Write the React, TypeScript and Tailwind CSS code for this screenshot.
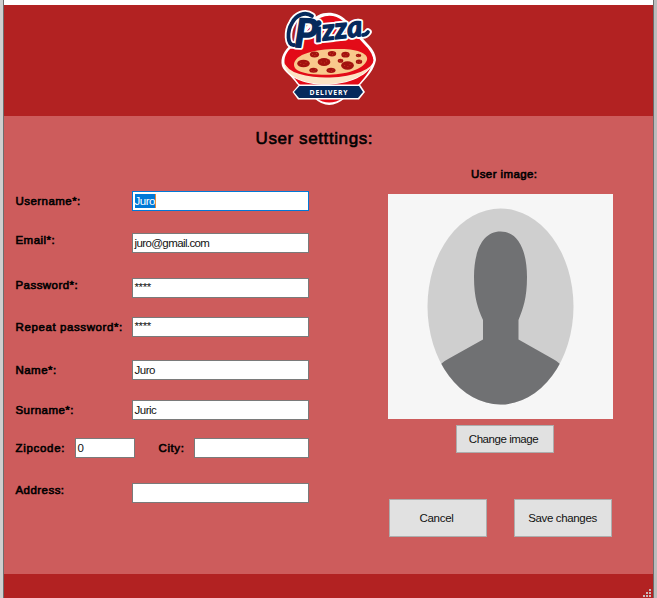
import React from "react";

type FieldProps = {
  label: string;
  value?: string;
  row: string;
  labelClass?: string;
  tracking?: string;
  valueClass?: string;
  selected?: boolean;
};

const labelFont =
  "font-['Liberation_Sans',Arial,sans-serif] text-[11.5px] leading-[14px] whitespace-pre text-black [-webkit-text-stroke:0.6px_black]";
const valueFont =
  "font-['Liberation_Sans',Arial,sans-serif] text-[11.5px] leading-[14px] whitespace-pre text-[#111]";

function Field({ label, value = "", row, labelClass = "", tracking = "tracking-[0.45px]", valueClass = "tracking-[-0.5px]", selected }: FieldProps) {
  return (
    <div className={`flex h-5 items-center ${row}`}>
      <span className={`w-[117px] shrink-0 pl-[0.5px] ${labelFont} ${tracking} ${labelClass}`}>{label}</span>
      <div className={`flex h-5 w-[177px] items-center border bg-white pl-[1.5px] ${selected ? "border-[#0078d7]" : "border-[#7a7a7a]"}`}>
        <span className={`leading-[14px] ${selected ? "border-r border-[#e88b3c] bg-[#0078d7] font-['Liberation_Sans',Arial,sans-serif] text-[11.5px] text-white" : valueFont} ${valueClass}`}>
          {value}
        </span>
      </div>
    </div>
  );
}

function Button({ children, className }: { children: React.ReactNode; className: string }) {
  return (
    <button
      className={`flex w-[98px] items-center justify-center border border-[#adadad] bg-[#e1e1e1] ${valueFont} ${className}`}
    >
      {children}
    </button>
  );
}

const letters: { c: string; x: number; y: number; size: number; turn: number }[] = [
  { c: "P", x: 24, y: 47, size: 40, turn: 2 },
  { c: "i", x: 46, y: 42, size: 28, turn: -6 },
  { c: "z", x: 53, y: 40.5, size: 29, turn: -6 },
  { c: "z", x: 65.5, y: 39, size: 29, turn: -6 },
  { c: "a", x: 78, y: 37.5, size: 29, turn: -6 },
];

function Word({ stroke, width }: { stroke: string; width: number }) {
  return (
    <g
      stroke={stroke}
      strokeWidth={width}
      fill={stroke}
      strokeLinejoin="round"
      strokeLinecap="round"
      fontFamily="Lato, sans-serif"
      fontStyle="italic"
      fontWeight="bold"
    >
      {letters.map((l, i) => (
        <text key={i} x={l.x} y={l.y} fontSize={l.size} transform={`rotate(${l.turn} ${l.x} ${l.y})`}>
          {l.c}
        </text>
      ))}
      <path
        d="M24 45 C17 46 17 31 22 23 C26 15 35 11 42 16 M93 35 Q96 35 98 32"
        fill="none"
        strokeWidth={width + 2.5}
      />
    </g>
  );
}

const pepperoni = [
  [44.5, 54.5, 4.6, 3],
  [62, 53.7, 4.2, 2.7],
  [75.5, 54.7, 4.2, 2.9],
  [88.5, 55.5, 2.8, 1.7],
  [33.5, 63.5, 6.3, 3.8],
  [54, 62, 6.4, 4],
  [70.5, 60.8, 2.8, 2],
  [89, 61.8, 3.2, 2.2],
  [77.5, 65.5, 6.4, 4.2],
  [43.5, 70.3, 4.2, 2.5],
  [61, 70.3, 4.5, 2.6],
];

function Logo() {
  return (
    <svg width="120" height="111" viewBox="0 5 120 111">
      <path
        d="M22 44 C14 50 10 58 12 66 C14 72 22 76 27 84 L44 98 Q59 112 75 98 L91 84 C98 76 104 70 106 60 C106 53 101 47 96 42 L76 20 C65 9 48 11 40 22Z"
        fill="#fff"
      />
      <path
        d="M24 46 C16 51 13 58 15 66 L29 84 L46 98 Q59 107 73 98 L89 84 C96 76 101 70 103 60 C103 54 99 49 94 44 L73 21 C64 13 51 14 43 24Z"
        fill="#e30b18"
      />
      <path d="M13 62 C15 93 98 93 105 58 C98 77 25 85 13 62Z" fill="#fff" />
      <path d="M14 63 C18 92 95 91 103.500 60 C94 78 27 82 14 63Z" fill="#fde3c4" />
      <ellipse cx="59.5" cy="61.5" rx="44" ry="16" fill="#e30b18" transform="rotate(-2 59 61)" />
      <path d="M24 65 C24 54 46 49 66 49 C88 48 99 54 97 60 C93 71 70 76 48 74.500 C34 74 24 71 24 65Z" fill="#f9c98c" />
      {pepperoni.map(([cx, cy, rx, ry], i) => (
        <g key={i}>
          <ellipse cx={cx} cy={cy} rx={rx} ry={ry} fill="#a3120f" />
          <path d={`M${cx - rx / 2} ${cy} h.8 M${cx + rx / 3} ${cy - 1} h.8 M${cx} ${cy + 1} h.8`} stroke="#d84a2b" strokeWidth=".8" />
        </g>
      ))}
      <Word stroke="#fff" width={5} />
      <Word stroke="#05295c" width={1.3} />
      <path d="M29 84.500 H90 L95 92 L89 99.500 H28 L22.500 92Z" fill="#fff" />
      <path d="M29.500 86 H89 L93 92 L88 98 H29 L24 92Z" fill="#05295c" />
      <text x="39.5" y="94.7" fontSize="6.8" fontWeight="700" fontFamily="'Open Sans', sans-serif" fill="#fff" textLength="38" lengthAdjust="spacing">
        DELIVERY
      </text>
    </svg>
  );
}

function Avatar() {
  return (
    <svg width="225" height="225" viewBox="0 0 225 225" className="block bg-[#f6f6f6]">
      <defs>
        <clipPath id="oval">
          <ellipse cx="112.5" cy="112.5" rx="73" ry="98" />
        </clipPath>
      </defs>
      <ellipse cx="112.5" cy="112.5" rx="73" ry="98" fill="#cfcfcf" />
      <path
        clipPath="url(#oval)"
        fill="#707173"
        d="M112.5 37.5 C94 37.5 86 58 86 83 C86 104 90 115 95 126 V145.5 L61 164.5 Q56 167 53 170 V225 H172 V170 Q169 167 165 165 L130.500 145.500 V126 C135 115 139 104 139 83 C139 58 131 37.500 112.500 37.500Z"
      />
    </svg>
  );
}

const gripDots = [[6, 0], [3, 3], [6, 3], [0, 6], [3, 6], [6, 6]];

export default function App() {
  return (
    <div className="flex h-[598px] w-[657px] overflow-hidden bg-[#cd5c5c]">
      <div className="w-1 shrink-0 border-r border-[#6e6e6e] bg-[#cfcfcf]" />
      <div className="flex w-[649px] shrink-0 flex-col">
        <div className="h-[5px] shrink-0 bg-white" />
        <header className="h-[111px] shrink-0 bg-[#b22222] pl-[266px]">
          <Logo />
        </header>
        <main className="h-[458px] shrink-0 bg-[#cd5c5c]">
          <h1 className="h-[46px] pt-3 pl-[251.5px] font-['Liberation_Sans',Arial,sans-serif] text-[17px] leading-[22px] tracking-[0.6px] whitespace-pre text-black [-webkit-text-stroke:0.6px_black]">
            User setttings:
          </h1>
          <div className="flex">
            <form className="w-[384px] shrink-0 pl-[11px]">
              <Field label="Username*:" value="Juro" row="mt-[29px]" selected />
              <Field label="Email*:" value="juro@gmail.com" row="mt-[22px]" labelClass="-mt-1.5" valueClass="tracking-[-0.6px]" />
              <Field label="Password*:" value="****" row="mt-[25px]" labelClass="-mt-1.5" valueClass="tracking-[-0.4px] -mt-0.5" />
              <Field label="Repeat password*:" value="****" row="mt-[19px]" tracking="tracking-[0.6px]" valueClass="tracking-[-0.4px] -mt-0.5" />
              <Field label="Name*:" value="Juro" row="mt-[23px]" />
              <Field label="Surname*:" value="Juric" row="mt-5" />
              <div className="mt-[18px] flex h-5 items-center">
                <span className={`w-[60px] pl-[0.5px] ${labelFont} tracking-[0.7px]`}>Zipcode:</span>
                <div className="flex h-5 w-[60px] items-center border border-[#7a7a7a] bg-white pl-[1.5px]">
                  <span className={valueFont}>0</span>
                </div>
                <span className={`ml-[23px] w-9 pl-[0.5px] ${labelFont} tracking-[0.6px]`}>City:</span>
                <div className="h-5 w-[115px] border border-[#7a7a7a] bg-white" />
              </div>
              <Field label="Address:" row="mt-[25px]" labelClass="-mt-1.5" />
            </form>
            <section className="w-[225px]">
              <div className={`h-8 pt-[5px] pl-[83px] ${labelFont} tracking-[0.4px]`}>User image:</div>
              <Avatar />
              <div className="mt-1.5 flex pl-[68px]">
                <Button className="h-7 pr-[3px] tracking-[-0.45px]">Change image</Button>
              </div>
              <div className="mt-[46px] flex gap-[27px] pl-px">
                <Button className="h-[38px] pr-[3px] tracking-[-0.3px]">Cancel</Button>
                <Button className="h-[38px] pr-[1px] tracking-[-0.35px]">Save changes</Button>
              </div>
            </section>
          </div>
        </main>
        <footer className="flex h-6 shrink-0 items-end justify-end bg-[#b22222] pr-0.5 pb-px">
          <svg width="8" height="8" viewBox="0 0 8 8" shapeRendering="crispEdges">
            {gripDots.map(([x, y]) => (
              <rect key={`${x}-${y}`} x={x} y={y} width="2" height="2" fill="#c8bcbc" />
            ))}
          </svg>
        </footer>
      </div>
      <div className="w-1 shrink-0 border-l border-[#6e6e6e] bg-[#bcbcbc]" />
    </div>
  );
}
